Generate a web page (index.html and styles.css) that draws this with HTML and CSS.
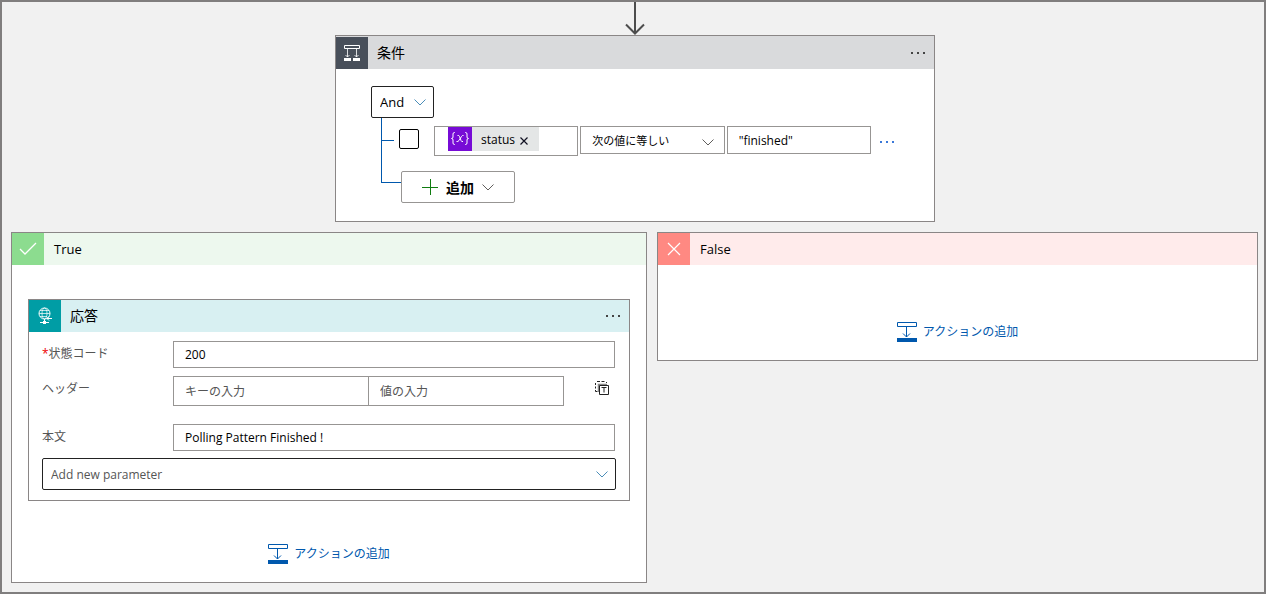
FILE: index.html
```html
<!DOCTYPE html>
<html lang="ja">
<head>
<meta charset="utf-8">
<meta name="viewport" content="width=device-width, initial-scale=1">
<title>条件</title>
<link rel="stylesheet" href="styles.css">
</head>
<body>
<main class="canvas">
  <svg class="flow-arrow" width="20" height="33" viewBox="0 0 20 33" aria-hidden="true">
    <path d="M10 0V31" stroke="#4d4d4d" stroke-width="2" fill="none"/>
    <path d="M1 22.500L10 31.500L19 22.500" stroke="#4d4d4d" stroke-width="2" fill="none"/>
  </svg>

  <section class="card condition">
    <header class="card-header header-condition">
      <span class="card-icon icon-condition">
        <svg width="16" height="16" viewBox="0 0 16 16" fill="none" stroke="#fff" aria-hidden="true">
          <path d="M.5.500h15v3H.5z"/>
          <path d="M3.500 4v8M12.500 4v8M1.500 10l2 2 2-2M10.500 10l2 2 2-2" stroke-opacity=".8"/>
          <path d="M0 13h7v3H0zM9 13h7v3H9z" fill="#fff" stroke="none"/>
        </svg>
      </span>
      <h2 class="card-title">条件</h2>
      <button class="more" type="button" aria-label="メニュー"><i></i><i></i><i></i></button>
    </header>
    <div class="condition-body">
      <span class="dropdown group-type">
        <select aria-label="グループの種類"><option>And</option><option>Or</option></select>
        <svg class="chevron blue" width="12" height="7" viewBox="0 0 12 7" aria-hidden="true"><path d="M.5.500L6 6L11.500.500"/></svg>
      </span>
      <div class="tree">
        <div class="connectors"><div class="connector-row"></div><div class="connector-add"></div></div>
        <div class="tree-items">
          <div class="rule">
            <input class="rule-check" type="checkbox" aria-label="行の選択">
            <div class="rule-fields">
              <div class="field token-field">
                <span class="token">
                  <span class="token-icon"><svg width="20" height="16" viewBox="0 0 20 16" fill="none" stroke="#fff" aria-hidden="true">
                    <path d="M5 1.500H4.500Q3 1.500 3 3V6Q3 7.500 1.500 7.500Q3 7.500 3 9V12Q3 13.500 4.500 13.500H5M15 1.500H15.500Q17 1.500 17 3V6Q17 7.500 18.500 7.500Q17 7.500 17 9V12Q17 13.500 15.500 13.500H15"/>
                    <path d="M7.500 4.500Q9 4 9.500 5.500L11 9.500Q11.500 11 13 10.500M13.500 4.500Q12.500 4 11.500 5.500L9 9.500Q8 11 6.500 10.500"/>
                  </svg></span>
                  <span class="token-name">status</span>
                  <button class="token-remove" type="button" aria-label="削除"><svg width="8" height="8" viewBox="0 0 8 8" aria-hidden="true"><path d="M.5.500l7 7M7.500.500l-7 7" stroke="#112" stroke-width="1.200"/></svg></button>
                </span>
              </div>
              <span class="dropdown operator">
                <select aria-label="演算子"><option>次の値に等しい</option></select>
                <svg class="chevron" width="12" height="7" viewBox="0 0 12 7" aria-hidden="true"><path d="M.5.500L6 6L11.500.500"/></svg>
              </span>
              <input class="field value" type="text" aria-label="値" value="&quot;finished&quot;">
            </div>
            <button class="more more-blue" type="button" aria-label="行のメニュー"><i></i><i></i><i></i></button>
          </div>
          <button class="add-button" type="button">
            <svg width="16" height="16" viewBox="0 0 16 16" fill="none" aria-hidden="true"><path d="M0 8.500h16M8.500 0v16" stroke="#107c10"/></svg>
            追加
            <svg class="chevron" width="12" height="7" viewBox="0 0 12 7" aria-hidden="true"><path d="M.5.500L6 6L11.500.500"/></svg>
          </button>
        </div>
      </div>
    </div>
  </section>

  <div class="branches">
    <section class="card">
      <header class="card-header header-true">
        <span class="card-icon icon-true"><svg width="18" height="14" viewBox="0 0 18 14" fill="none" aria-hidden="true"><path d="M1 7l5 5L17 1" stroke="#fff" stroke-width="1.300"/></svg></span>
        <h2 class="card-title">True</h2>
      </header>
      <div class="branch-body">
        <section class="card response">
          <header class="card-header header-response">
            <span class="card-icon icon-response"><svg width="14" height="18" viewBox="0 0 14 18" fill="none" stroke="#fff" aria-hidden="true">
              <circle cx="6.500" cy="6.500" r="5.500"/>
              <ellipse cx="6.500" cy="6.500" rx="2.500" ry="5.500" stroke-opacity=".7"/>
              <path d="M1 6.500h11M2 3.500h9M2 9.500h7" stroke-opacity=".7"/>
              <path d="M14 11.500H9M11 9.500l-2 2 2 2"/>
              <path d="M6.500 12v3M2 15.500h9"/><path d="M5 14h3v3H5z" fill="#fff" stroke="none"/>
            </svg></span>
            <h3 class="card-title">応答</h3>
            <button class="more" type="button" aria-label="メニュー"><i></i><i></i><i></i></button>
          </header>
          <form class="response-form">
            <div class="form-row">
              <label for="status-code"><span class="required">*</span>状態コード</label>
              <input class="field" id="status-code" type="text" value="200">
            </div>
            <div class="form-row">
              <label for="header-key">ヘッダー</label>
              <div class="header-pair">
                <input class="field" id="header-key" type="text" placeholder="キーの入力">
                <input class="field header-value" type="text" aria-label="ヘッダーの値" placeholder="値の入力">
                <button class="text-mode" type="button" aria-label="テキスト モードに切り替える"><svg width="14" height="14" viewBox="0 0 14 14" fill="none" stroke="#222" aria-hidden="true">
                  <path d="M2 .5h3M6.500.500h3M.5 2v2M.5 5.500v2M.5 9v1.500h2M11 1.500h1"/>
                  <path d="M3.500 11V3.500H12" stroke="#888" stroke-width="1.500"/>
                  <path d="M4.500 4.500h9v9h-9z" fill="#fff"/><path d="M6.500 6.500h5M9 6.500V11.500"/>
                </svg></button>
              </div>
            </div>
            <div class="form-row row-body">
              <label for="body-text">本文</label>
              <input class="field" id="body-text" type="text" value="Polling Pattern Finished !">
            </div>
            <span class="dropdown new-parameter">
              <select aria-label="Add new parameter"><option>Add new parameter</option></select>
              <svg class="chevron blue" width="12" height="7" viewBox="0 0 12 7" aria-hidden="true"><path d="M.5.500L6 6L11.500.500"/></svg>
            </span>
          </form>
        </section>
        <button class="add-action" type="button">
          <svg width="20" height="20" viewBox="0 0 20 20" fill="none" stroke="#0058ad" aria-hidden="true"><path d="M.5.500h19v4H.5z"/><path d="M9.500 5v10M6 11.500l3.500 3.500 3.500-3.500"/><path d="M0 16h20v4H0z" fill="#0058ad" stroke="none"/></svg>
          アクションの追加
        </button>
      </div>
    </section>

    <section class="card">
      <header class="card-header header-false">
        <span class="card-icon icon-false"><svg width="14" height="14" viewBox="0 0 14 14" aria-hidden="true"><path d="M1 1l12 12M13 1L1 13" stroke="#fff" stroke-width="1.200"/></svg></span>
        <h2 class="card-title">False</h2>
      </header>
      <div class="branch-body branch-empty">
        <button class="add-action" type="button">
          <svg width="20" height="20" viewBox="0 0 20 20" fill="none" stroke="#0058ad" aria-hidden="true"><path d="M.5.500h19v4H.5z"/><path d="M9.500 5v10M6 11.500l3.500 3.500 3.500-3.500"/><path d="M0 16h20v4H0z" fill="#0058ad" stroke="none"/></svg>
          アクションの追加
        </button>
      </div>
    </section>
  </div>
</main>
</body>
</html>
```

FILE: styles.css
```css
* {
  box-sizing: border-box;
}

body {
  margin: 0;
  font-family: "Open Sans", "Noto Sans CJK JP", sans-serif;
  font-size: 12px;
  color: #000;
}

button,
input,
select {
  margin: 0;
  font: inherit;
  color: inherit;
}

button {
  padding: 0;
  border: 0;
  background: none;
  cursor: pointer;
}

svg {
  display: block;
  flex: none;
}

.canvas {
  display: flex;
  flex-direction: column;
  min-height: 100vh;
  padding: 0 5px 9px 9px;
  border: 2px solid #807e7e;
  background: #f1f1f1;
}

.flow-arrow {
  align-self: center;
}

/* Cards */
.card {
  border: 1px solid #8a8686;
  background: #fff;
}

.card-header {
  display: flex;
  align-items: center;
  height: 32px;
}

.card-icon {
  display: grid;
  place-items: center;
  width: 32px;
  height: 32px;
}

.card-title {
  flex: 1;
  margin: 0 0 0 9px;
  font-size: 14px;
  font-weight: 400;
  line-height: 20px;
}

.header-true .card-title,
.header-false .card-title {
  margin-left: 10px;
  font-size: 13px;
}

.header-condition {
  height: 33px;
  padding-top: 1px;
  background: #d9dadc;
}

.icon-condition { background: #484f5a; }
.header-true { background: #edf8ee; }
.icon-true { background: #8cdc8f; }
.header-false { background: #ffebeb; }
.icon-false { background: #ff8982; }
.header-response { background: #d8f0f2; }
.icon-response { background: #009da5; }

.more {
  display: flex;
  gap: 4px;
  padding: 8px 9px;
}

.more i {
  width: 2px;
  height: 2px;
  background: #444;
}

.more-blue i {
  background: #3a78d8;
}

/* Fields */
.field {
  min-width: 0;
  padding: 0 11px;
  border: 1px solid #979593;
  border-radius: 0;
  background: #fff;
}

.field::placeholder {
  color: #555;
  opacity: 1;
}

.dropdown {
  display: grid;
  align-items: center;
}

.dropdown > * {
  grid-area: 1 / 1;
}

.dropdown select {
  width: 100%;
  height: 32px;
  padding: 0 8px;
  border: 1px solid #222;
  border-radius: 2px;
  background: #fff;
  appearance: none;
}

.dropdown .chevron {
  justify-self: end;
  margin-right: 8px;
  pointer-events: none;
}

.chevron {
  fill: none;
  stroke: #605e5c;
}

.chevron.blue {
  stroke: #4a8db8;
}

/* Condition */
.condition {
  align-self: center;
  width: 100%;
  max-width: 600px;
}

.condition-body {
  padding: 17px 40px 18px 35px;
}

.group-type {
  width: 63px;
  font-size: 13px;
}

.tree {
  display: flex;
  margin-left: 10px;
}

.connectors {
  width: 18px;
}

.connector-row,
.connector-add {
  border-left: 1px solid #0058ad;
  border-bottom: 1px solid #0058ad;
}

.connector-row {
  width: 13px;
  height: 23px;
}

.connector-add {
  width: 20px;
  height: 42px;
}

.tree-items {
  flex: 1;
  padding-top: 8px;
}

.rule {
  display: flex;
  align-items: flex-start;
}

.rule-check {
  width: 20px;
  height: 20px;
  margin: 3px 15px 0 0;
  border: 1px solid #000;
  border-radius: 2px;
  background: #fff;
  appearance: none;
}

.rule-check:checked {
  background: #0058ad;
}

.rule-fields {
  display: grid;
  flex: 1;
  grid-template-columns: repeat(3, 1fr);
  align-items: start;
  gap: 2px;
}

.token-field {
  height: 30px;
  padding: 0 13px;
}

.token {
  display: inline-flex;
  align-items: center;
  height: 24px;
  padding-right: 11px;
  background: #e4e6e6;
}

.token-icon {
  display: grid;
  place-items: center;
  width: 24px;
  height: 24px;
  margin-right: 9px;
  background: #770bd6;
}

.token-remove {
  margin: 4px 0 0 5px;
}

.operator select {
  height: 28px;
  padding: 0 11px;
  border-color: #979593;
  border-radius: 0;
  font-size: 11px;
}

.operator .chevron {
  margin: 4px 11px 0 0;
}

.value {
  height: 28px;
}

.rule .more-blue {
  padding: 15px 0 8px 9px;
}

.add-button {
  display: flex;
  align-items: center;
  justify-content: center;
  gap: 8px;
  width: 114px;
  height: 32px;
  margin: 15px 0 0 2px;
  border: 1px solid #979593;
  border-radius: 2px;
  background: #fff;
  font-size: 14px;
  font-weight: 700;
}

/* Branches */
.branches {
  display: grid;
  grid-template-columns: 636fr 601fr;
  align-items: start;
  gap: 10px;
  margin: 10px 1px 0 0;
}

.branch-body {
  display: flex;
  flex-direction: column;
  align-items: center;
  gap: 43px;
  padding: 34px 16px 18px;
}

.branch-empty {
  padding-top: 57px;
}

.response {
  width: 100%;
}

.response-form {
  display: flex;
  flex-direction: column;
  gap: 8px;
  padding: 9px 13px 10px;
}

.form-row {
  display: grid;
  grid-template-columns: 131px 1fr;
  padding-right: 1px;
}

.form-row label {
  color: #555;
  line-height: 26px;
}

.form-row .field {
  height: 27px;
}

.required {
  color: #e00;
}

.header-pair {
  display: flex;
  align-items: flex-start;
}

.header-pair .field {
  flex: 1;
  height: 30px;
}

.header-pair .header-value {
  margin-left: -1px;
}

.text-mode {
  padding: 5px 6px 5px 31px;
}

.row-body {
  margin-top: 10px;
}

.new-parameter {
  margin-top: -1px;
  color: #555;
}

.add-action {
  display: flex;
  align-items: center;
  gap: 6px;
  color: #0058ad;
  line-height: 20px;
}
```
